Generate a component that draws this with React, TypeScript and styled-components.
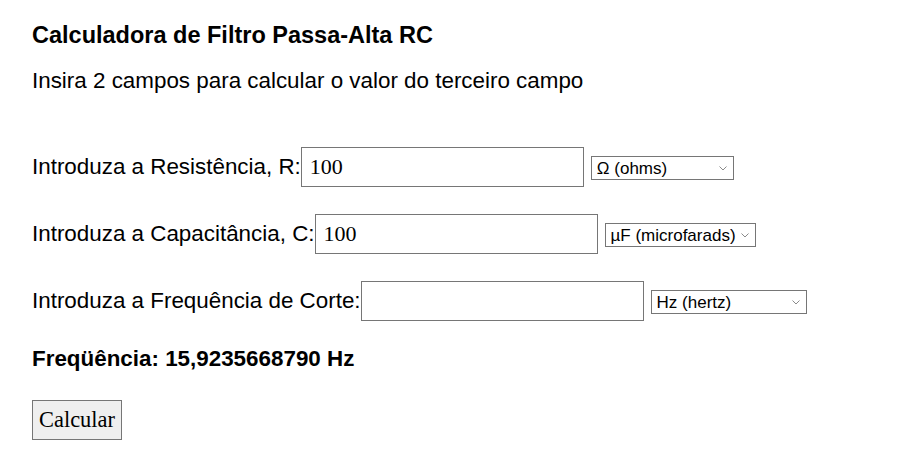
import React from "react";
import styled, { createGlobalStyle } from "styled-components";

const Global = createGlobalStyle`
  html, body { margin: 0; padding: 0; background: #fff; }
  body { font-family: "Liberation Sans", Arial, sans-serif; color: #000; }
`;

const Page = styled.div`
  padding: 22px 32px 0 32px;
  display: flex;
  flex-direction: column;
`;

const Title = styled.h1`
  margin: 0;
  font-size: 23.5px;
  line-height: 27px;
  font-weight: bold;
`;

const Subtitle = styled.p`
  margin: 19px 0 0 0;
  font-size: 22.4px;
  line-height: 26px;
`;

const Form = styled.div`
  margin-top: 53px;
  display: flex;
  flex-direction: column;
  gap: 27px;
`;

const Row = styled.div`
  display: flex;
  align-items: center;
  height: 40px;
`;

const Label = styled.label`
  font-size: 22.4px;
  line-height: 26px;
  white-space: nowrap;
`;

const TextInput = styled.input`
  box-sizing: border-box;
  width: 283px;
  height: 40px;
  margin: 0;
  border: 1px solid #767676;
  padding: 0 8px;
  font-family: "Liberation Serif", "Times New Roman", serif;
  font-size: 22px;
  color: #000;
  background: #fff;
  outline: none;
`;

const SelectWrap = styled.div<{ $w: number }>`
  position: relative;
  margin: 2px 0 0 7px;
  width: ${(p) => p.$w}px;
  height: 24px;
`;

const Select = styled.select`
  appearance: none;
  -webkit-appearance: none;
  box-sizing: border-box;
  width: 100%;
  height: 100%;
  margin: 0;
  border: 1px solid #767676;
  border-radius: 0;
  padding: 0 16px 0 5px;
  font-family: "Liberation Sans", Arial, sans-serif;
  font-size: 17px;
  color: #000;
  background: #fff;
  outline: none;
`;

const Chevron = styled.svg`
  position: absolute;
  right: 7px;
  top: 10px;
  width: 8px;
  height: 5px;
  pointer-events: none;
`;

const Result = styled.div`
  margin-top: 25px;
  font-size: 22.4px;
  line-height: 26px;
  font-weight: bold;
`;

const Button = styled.button`
  align-self: flex-start;
  margin-top: 28px;
  box-sizing: border-box;
  width: 90px;
  height: 40px;
  border: 1px solid #767676;
  background: #efefef;
  font-family: "Liberation Serif", "Times New Roman", serif;
  font-size: 22.4px;
  color: #000;
  padding: 0;
  border-radius: 0;
`;

function UnitSelect({ w, label }: { w: number; label: string }) {
  return (
    <SelectWrap $w={w}>
      <Select defaultValue="a">
        <option value="a">{label}</option>
      </Select>
      <Chevron viewBox="0 0 8 5">
        <path d="M0.5 0.5 L4 4 L7.5 0.5" fill="none" stroke="#8a8a8a" strokeWidth="1" />
      </Chevron>
    </SelectWrap>
  );
}

export default function App() {
  return (
    <>
      <Global />
      <Page>
        <Title>Calculadora de Filtro Passa-Alta RC</Title>
        <Subtitle>Insira 2 campos para calcular o valor do terceiro campo</Subtitle>
        <Form>
          <Row>
            <Label>Introduza a Resistência, R:</Label>
            <TextInput defaultValue="100" />
            <UnitSelect w={143} label="Ω (ohms)" />
          </Row>
          <Row>
            <Label>Introduza a Capacitância, C:</Label>
            <TextInput defaultValue="100" />
            <UnitSelect w={151} label="µF (microfarads)" />
          </Row>
          <Row>
            <Label>Introduza a Frequência de Corte:</Label>
            <TextInput defaultValue="" />
            <UnitSelect w={156} label="Hz (hertz)" />
          </Row>
        </Form>
        <Result>Freqüência: 15,9235668790 Hz</Result>
        <Button>Calcular</Button>
      </Page>
    </>
  );
}
